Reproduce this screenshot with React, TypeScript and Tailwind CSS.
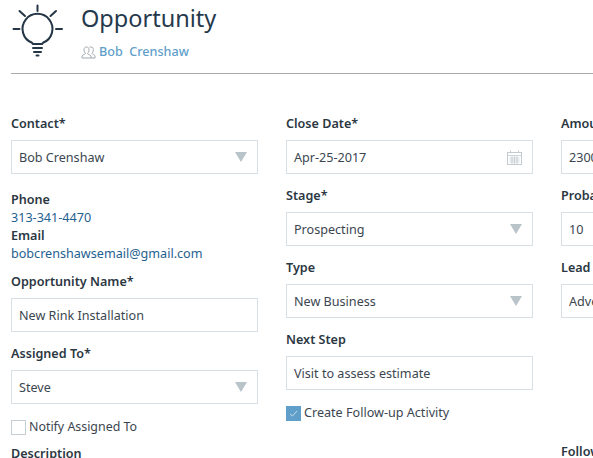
function Chevron() {
  return (
    <svg width="12" height="10" viewBox="0 0 12 10" className="shrink-0">
      <path d="M0 0H12L6 10Z" fill="#b9c3ca" />
    </svg>
  );
}
function Calendar() {
  return (
    <svg width="15" height="15" viewBox="0 0 15 15" className="shrink-0" fill="none" stroke="#c3cbd1" strokeWidth="1">
      <rect x="0.5" y="2.5" width="14" height="12" />
      <path d="M0.5 5.5H14.5M2.5 8H12.5M2.5 10H12.5M2.5 12H12.5M5 6V14M7.5 6V14M10 6V14" strokeWidth="0.8" />
      <path d="M3.5 0.5V3M11.5 0.5V3" />
    </svg>
  );
}
function Box({ value, kind }: { value: string; kind?: "select" | "date" }) {
  return (
    <div className="flex h-[34px] w-[247px] items-center justify-between border border-[#d8e0e5] bg-white pl-[7px] pr-[10px] text-[12.6px] text-[#3b4650]">
      <span className="mt-[2px] whitespace-nowrap">{value}</span>
      {kind === "select" && <Chevron />}
      {kind === "date" && <Calendar />}
    </div>
  );
}
function Label({ text }: { text: string }) {
  return <div className="h-[20px] whitespace-nowrap text-[12.6px] font-semibold leading-[22px] text-[#2b3742]">{text}</div>;
}
function Field({ label, value, kind }: { label: string; value: string; kind?: "select" | "date" }) {
  return (
    <div className="mb-[11px]">
      <Label text={label} />
      <div className="mt-[7px]">
        <Box value={value} kind={kind} />
      </div>
    </div>
  );
}
export default function App() {
  return (
    <div className="h-[458px] w-[593px] overflow-hidden bg-white font-['Noto_Sans','Open_Sans',sans-serif]">
      <div className="ml-[11px] flex h-[74px] border-b border-[#aaaaaa]">
        <svg width="54" height="58" viewBox="0 0 54 58" className="mt-[4px] shrink-0" fill="none" stroke="#253646" strokeWidth="2" strokeLinecap="round">
          <path d="M26.500 1.500V7M8.500 7L14 12M45 7L39.500 12M2.500 25H8.500M45 25H51" />
          <path d="M22 40L21 38.800A15 15 0 1 1 32 38.800L31 40Z" strokeLinejoin="round" />
          <path d="M22 44H31M23 48H30" />
          <path d="M25.500 51.500H27.500" />
        </svg>
        <div className="ml-[16px]">
          <div className="mt-[2px] text-[23.5px] leading-[32px] text-[#26394c]">Opportunity</div>
          <div className="mt-[9px] flex items-center gap-[3px] text-[12.6px] font-medium leading-[18px] text-[#5f9fca]">
            <svg width="15" height="13" viewBox="0 0 15 13" fill="none" stroke="#8a949c" strokeWidth="0.8">
              <path d="M1 12V10C1 9 4 8.500 4.500 7.500C3.500 6.500 3 5.500 3 3.500C3 2 4 1 5.500 1C7 1 8 2 8 3.500C8 5.500 7.500 6.500 6.500 7.500C7 8.500 10 9 10 10V12Z" />
              <path d="M8.500 1.200C9 1 9.500 1 10 1C11.500 1 12.300 2 12.300 3.500C12.300 5.500 11.800 6.500 11 7.500C11.500 8.500 14 9 14 10V12H10" />
            </svg>
            <span className="whitespace-pre">Bob  Crenshaw</span>
          </div>
        </div>
      </div>
      <div className="ml-[11px] mt-[39px] flex gap-[28px]">
        <div className="w-[247px] shrink-0">
          <Field label="Contact*" value="Bob Crenshaw" kind="select" />
          <div className="mt-[17px] text-[12.6px] leading-[18px]">
            <div className="font-semibold text-[#2b3742]">Phone</div>
            <div className="text-[#1f6190]">313-341-4470</div>
            <div className="font-semibold text-[#2b3742]">Email</div>
            <div className="text-[#1f6190]">bobcrenshawsemail@gmail.com</div>
          </div>
          <div className="mt-[8px]">
            <Field label="Opportunity Name*" value="New Rink Installation" />
            <Field label="Assigned To*" value="Steve" kind="select" />
          </div>
          <div className="mt-[14px] flex h-[18px] items-center gap-[3px] text-[12.4px] text-[#3b4650]">
            <span className="h-[15px] w-[15px] border border-[#c6ced3] bg-white" />
            <span>Notify Assigned To</span>
          </div>
          <div className="mt-[7px]">
            <Label text="Description" />
          </div>
        </div>
        <div className="w-[247px] shrink-0">
          <Field label="Close Date*" value="Apr-25-2017" kind="date" />
          <Field label="Stage*" value="Prospecting" kind="select" />
          <Field label="Type" value="New Business" kind="select" />
          <Field label="Next Step" value="Visit to assess estimate" />
          <div className="mt-[14px] flex h-[18px] items-center gap-[3px] text-[12.6px] text-[#3b4650]">
            <span className="flex h-[15px] w-[15px] items-center justify-center bg-[#5f9fca]">
              <svg width="9" height="7" viewBox="0 0 9 7" fill="none" stroke="#c4dcec" strokeWidth="1">
                <path d="M1 4L3.500 6L8 1" />
              </svg>
            </span>
            <span>Create Follow-up Activity</span>
          </div>
        </div>
        <div className="w-[247px] shrink-0">
          <Field label="Amount*" value="2300" />
          <Field label="Probability" value="10" />
          <Field label="Lead Source" value="Advertisement" kind="select" />
          <div className="mt-[123px]">
            <Label text="Follow-up Date" />
          </div>
        </div>
      </div>
    </div>
  );
}
